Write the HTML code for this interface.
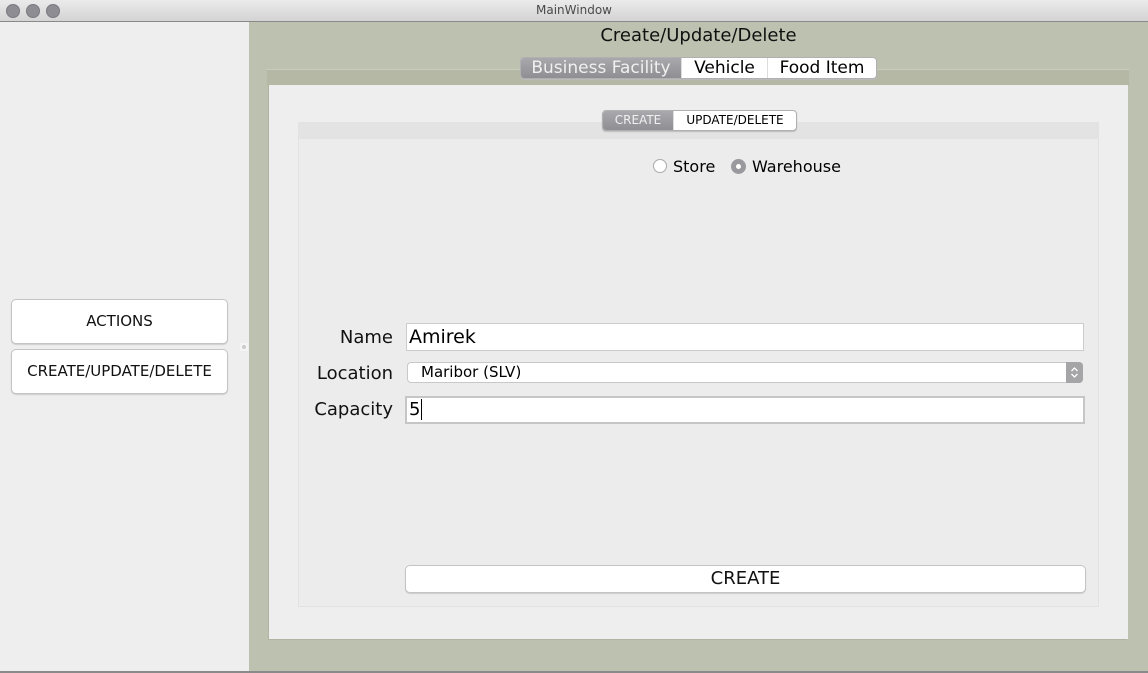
<html><head><style>
body{margin:0;width:1148px;height:673px;position:relative;overflow:hidden;font-family:"DejaVu Sans",sans-serif;background:#eee}
.a{position:absolute}
.tb{left:0;top:0;width:1148px;height:21px;background:linear-gradient(#ebebeb,#d3d3d3);border-bottom:1px solid #8a8a8a;text-align:center;font-size:12px;line-height:21px;color:#4a4a4a}
.dot{top:4px;width:12px;height:12px;border-radius:50%;background:#8e8d93;border:0.5px solid #7a797f}
.btn{background:#fff;border:1px solid #c4c4c4;border-radius:5px;text-align:center;font-size:15px;color:#111;box-shadow:0 1px 1px #ccc}
.seg{display:flex;border:1px solid #b0b0b0;border-radius:4px;overflow:hidden;background:#fff;box-shadow:0 1px 1px #bbb}
.seg div{border-right:1px solid #ddd;text-align:center;white-space:nowrap}
.sel{background:linear-gradient(#a9a9ad,#8e8e93);color:#f0f0f0}
.lbl{font-size:18px;color:#111;text-align:right;width:90px}
</style></head><body>
<div class="a tb">MainWindow</div>
<div class="a dot" style="left:6px"></div><div class="a dot" style="left:26px"></div><div class="a dot" style="left:46px"></div>
<div class="a" style="left:0;top:22px;width:249px;height:649px;background:#eeeeee"></div>
<div class="a btn" style="left:11px;top:299px;width:215px;height:43px;line-height:43px">ACTIONS</div>
<div class="a btn" style="left:11px;top:349px;width:215px;height:43px;line-height:43px">CREATE/UPDATE/DELETE</div>
<div class="a" style="left:240px;top:343px;width:8px;height:8px;background:#f4f4f4"><div style="margin:2px;width:4px;height:4px;border-radius:50%;background:#ccc"></div></div>
<div class="a" style="left:249px;top:22px;width:899px;height:649px;background:#bdc1b0"></div>
<div class="a" style="left:249px;top:22px;width:899px;text-align:center;font-size:18px;line-height:28px;color:#111">Create/Update/Delete</div>
<div class="a" style="left:267px;top:69px;width:862px;height:16px;background:#b4b8a5;border-top:1px solid #c8ccbc"></div>
<div class="a" style="left:269px;top:85px;width:859px;height:554px;background:#eeeeee;box-shadow:-1px 1px 0 #b0b4a2"></div>
<div class="a seg" style="left:520px;top:57px;height:20px;font-size:17px;line-height:20px">
<div class="sel" style="width:160px">Business Facility</div><div style="width:85px">Vehicle</div><div style="border:0;width:108px">Food Item</div></div>
<div class="a" style="left:298px;top:122px;width:801px;height:485px;border:1px solid #e2e2e2;box-sizing:border-box;background:#ececec"></div>
<div class="a" style="left:299px;top:123px;width:799px;height:16px;background:#e3e3e3"></div>
<div class="a seg" style="left:602px;top:110px;height:19px;font-size:12px;line-height:19px">
<div class="sel" style="width:70px">CREATE</div><div style="border:0;width:122px">UPDATE/DELETE</div></div>
<div class="a" style="left:653px;top:159px;width:14px;height:14px;border-radius:50%;background:#fff;border:1px solid #aaa;box-sizing:border-box"></div>
<div class="a" style="left:673px;top:157px;font-size:16px">Store</div>
<div class="a" style="left:731px;top:159px;width:15px;height:15px;border-radius:50%;background:#9a9a9e;box-sizing:border-box"><div style="margin:5px;width:5px;height:5px;border-radius:50%;background:#fff"></div></div>
<div class="a" style="left:752px;top:157px;font-size:16px">Warehouse</div>
<div class="a lbl" style="left:303px;top:327px">Name</div>
<div class="a lbl" style="left:303px;top:363px">Location</div>
<div class="a lbl" style="left:303px;top:399px">Capacity</div>
<div class="a" style="left:406px;top:323px;width:678px;height:28px;background:#fff;border:1px solid #ccc;box-sizing:border-box;font-size:19px;line-height:26px;padding-left:2px">Amirek</div>
<div class="a" style="left:407px;top:362px;width:676px;height:21px;background:#fff;border:1px solid #c8c8c8;border-radius:4px;box-sizing:border-box;font-size:15px;line-height:19px;padding-left:13px">Maribor (SLV)</div>
<div class="a" style="left:1066px;top:362px;width:17px;height:21px;background:#a5a5a8;border-radius:0 4px 4px 0;box-sizing:border-box"><svg width="17" height="21"><path d="M5.5 9 L8.5 6 L11.5 9 M5.5 12 L8.5 15 L11.5 12" stroke="#fff" stroke-width="1.3" fill="none"/></svg></div>
<div class="a" style="left:405px;top:396px;width:680px;height:28px;background:#fff;border:2px solid #c6c6c6;box-sizing:border-box;font-size:18px;line-height:24px;padding-left:2px">5<span style="border-left:1px solid #000;margin-left:1px"></span></div>
<div class="a btn" style="left:405px;top:565px;width:679px;height:26px;line-height:26px;font-size:18px">CREATE</div>
<div class="a" style="left:0;top:671px;width:1148px;height:2px;background:#8a8a8a"></div>
</body></html>
